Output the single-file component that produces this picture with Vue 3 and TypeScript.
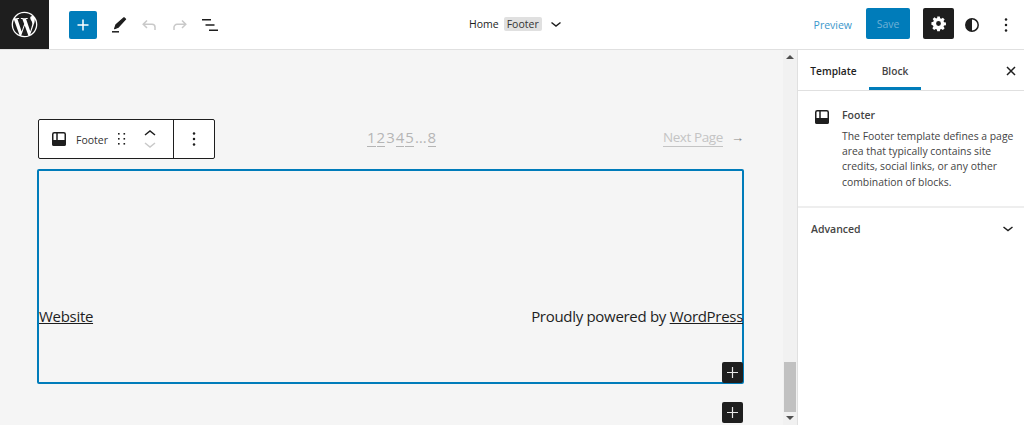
<script setup lang="ts">
const pages: { label: string; link: boolean }[] = [
  { label: '1', link: true },
  { label: '2', link: true },
  { label: '3', link: false },
  { label: '4', link: true },
  { label: '5', link: true },
  { label: '…', link: false },
  { label: '8', link: true },
]
</script>

<template>
  <div class="app">
    <header class="topbar">
      <div class="logo">
        <svg width="27" height="27" viewBox="0 0 24 24" fill="#fff">
          <path d="M12 .6a11.4 11.4 0 1 0 0 22.8A11.4 11.4 0 0 0 12 .6zM1.75 12c0-1.49.32-2.9.89-4.17l4.89 13.4A10.25 10.25 0 0 1 1.75 12zM12 22.25c-1 0-1.97-.15-2.89-.42l3.07-8.92 3.15 8.62.07.14c-1.06.37-2.2.58-3.4.58zm1.41-15.05c.62-.03 1.17-.1 1.17-.1.55-.06.49-.87-.06-.84 0 0-1.66.13-2.73.13-1 0-2.7-.13-2.7-.13-.55-.03-.62.81-.06.84 0 0 .52.07 1.07.1l1.6 4.37-2.24 6.72L5.73 7.2c.62-.03 1.17-.1 1.17-.1.55-.06.49-.87-.06-.84 0 0-1.66.13-2.73.13-.19 0-.42 0-.66-.01A10.24 10.24 0 0 1 12 1.75c2.67 0 5.1 1.02 6.93 2.69h-.13c-1 0-1.72.87-1.72 1.81 0 .84.49 1.55 1 2.39.39.68.84 1.55.84 2.8 0 .87-.33 1.88-.77 3.28l-1.01 3.38-3.73-10.9zm3.74 13.66 3.13-9.05c.58-1.46.78-2.62.78-3.66 0-.38-.03-.73-.07-1.05a10.25 10.25 0 0 1-3.84 13.76z" />
        </svg>
      </div>
      <div class="tools">
        <button class="add" aria-label="Add">
          <svg width="12" height="12" viewBox="0 0 12 12"><path d="M6 .5v11M.5 6h11" stroke="#fff" stroke-width="1.5" fill="none" /></svg>
        </button>
        <svg class="pen" width="24" height="24" viewBox="0 0 24 24">
          <path d="M20.6 6.2 19 4.8 11 11.8 9.6 15.6l3.7-1.4z" fill="#1e1e1e" stroke="#1e1e1e" stroke-width="1.2" stroke-linejoin="round" />
          <path d="M7 18.8h7" stroke="#1e1e1e" stroke-width="1.5" />
        </svg>
        <svg class="undo" width="24" height="24" viewBox="0 0 24 24" fill="none" stroke="#c9c9c9" stroke-width="1.5">
          <path d="M11 7.5 7.2 11.3l3.8 3.7M7.5 11.3H16c1.6 0 3 1.3 3 3V17" />
        </svg>
        <svg class="redo" width="24" height="24" viewBox="0 0 24 24" fill="none" stroke="#c9c9c9" stroke-width="1.5">
          <path d="M13 7.5l3.8 3.8L13 15M16.5 11.3H8c-1.6 0-3 1.3-3 3V17" />
        </svg>
        <svg class="list" width="24" height="24" viewBox="0 0 24 24" stroke="#1e1e1e" stroke-width="1.5">
          <path d="M3 6.7h9M6.5 12h9M10 17.3h9" />
        </svg>
      </div>
      <div class="crumbs">
        <span class="home">Home</span>
        <span class="chip">Footer</span>
        <svg width="20" height="20" viewBox="0 0 20 20" fill="none" stroke="#1e1e1e" stroke-width="1.5"><path d="M5.5 8.5 10 12l4.5-3.5" /></svg>
      </div>
      <div class="actions">
        <span class="preview">Preview</span>
        <button class="save">Save</button>
        <span class="gear">
          <svg width="17" height="17" viewBox="0 0 24 24" fill="#fff">
            <path fill-rule="evenodd" d="M10.2 2h3.6l.5 2.7 1.6.7 2.3-1.6 2.5 2.5-1.6 2.3.7 1.6 2.7.5v3.6l-2.7.5-.7 1.6 1.6 2.3-2.5 2.5-2.3-1.6-1.6.7-.5 2.7h-3.6l-.5-2.7-1.6-.7-2.3 1.6-2.5-2.5 1.6-2.3-.7-1.6L2 13.8v-3.6l2.7-.5.7-1.6-1.6-2.3 2.5-2.5 2.3 1.6 1.6-.7zM12 8.6a3.4 3.4 0 1 0 0 6.8 3.4 3.4 0 0 0 0-6.8z" />
          </svg>
        </span>
        <svg class="contrast" width="24" height="24" viewBox="0 0 24 24">
          <circle cx="12" cy="12" r="6.2" fill="none" stroke="#1e1e1e" stroke-width="1.5" />
          <path d="M12 5.8a6.2 6.2 0 0 0 0 12.4z" fill="#1e1e1e" />
        </svg>
        <svg class="more" width="24" height="24" viewBox="0 0 24 24" fill="#1e1e1e">
          <circle cx="12" cy="6.5" r="1.25" /><circle cx="12" cy="12" r="1.25" /><circle cx="12" cy="17.5" r="1.25" />
        </svg>
      </div>
    </header>

    <div class="body">
      <main class="canvas">
        <div class="top-row">
          <div class="block-toolbar">
            <div class="tb-main">
              <svg width="24" height="24" viewBox="0 0 24 24">
                <rect x="5.75" y="5.75" width="12.5" height="12.5" rx="1.5" fill="none" stroke="#1e1e1e" stroke-width="1.5" />
                <path d="M5 13h14v4a2 2 0 0 1-2 2H7a2 2 0 0 1-2-2z" fill="#1e1e1e" />
                <path d="M10 6v7" stroke="#1e1e1e" stroke-width="1.5" />
              </svg>
              <span class="tb-label">Footer</span>
              <svg class="drag" width="12" height="14" viewBox="0 0 12 14" fill="#1e1e1e">
                <rect x="2" y="1" width="1.6" height="1.6" /><rect x="7.5" y="1" width="1.6" height="1.6" />
                <rect x="2" y="6" width="1.6" height="1.6" /><rect x="7.5" y="6" width="1.6" height="1.6" />
                <rect x="2" y="11" width="1.6" height="1.6" /><rect x="7.5" y="11" width="1.6" height="1.6" />
              </svg>
              <div class="movers">
                <svg width="14" height="10" viewBox="0 0 14 10" fill="none" stroke="#1e1e1e" stroke-width="1.5"><path d="M2 7l5-4 5 4" /></svg>
                <svg width="14" height="10" viewBox="0 0 14 10" fill="none" stroke="#c9c9c9" stroke-width="1.5"><path d="M2 3l5 4 5-4" /></svg>
              </div>
            </div>
            <div class="tb-more">
              <svg width="24" height="24" viewBox="0 0 24 24" fill="#1e1e1e">
                <circle cx="12" cy="6.5" r="1.25" /><circle cx="12" cy="12" r="1.25" /><circle cx="12" cy="17.5" r="1.25" />
              </svg>
            </div>
          </div>
          <div class="pages">
            <span v-for="(p, i) in pages" :key="i" :class="{ plink: p.link }">{{ p.label }}</span>
          </div>
          <div class="next"><span class="plink">Next Page</span><span class="arrow">→</span></div>
        </div>
        <section class="footer-block">
          <a class="link">Website</a>
          <span class="powered">Proudly powered by <a class="link">WordPress</a></span>
          <button class="inserter in-block" aria-label="Add block">
            <svg width="11" height="11" viewBox="0 0 11 11"><path d="M5.5 0v11M0 5.5h11" stroke="#e8e8e8" stroke-width="1.2" fill="none" /></svg>
          </button>
        </section>
        <div class="after">
          <button class="inserter" aria-label="Add block">
            <svg width="11" height="11" viewBox="0 0 11 11"><path d="M5.5 0v11M0 5.5h11" stroke="#e8e8e8" stroke-width="1.2" fill="none" /></svg>
          </button>
        </div>
      </main>

      <div class="scrollbar">
        <span class="sb-up"></span>
        <div class="sb-track"><div class="sb-thumb"></div></div>
        <span class="sb-down"></span>
      </div>

      <aside class="sidebar">
        <div class="tabs">
          <span class="tab">Template</span>
          <span class="tab active">Block</span>
          <svg class="close" width="16" height="16" viewBox="0 0 16 16" stroke="#1e1e1e" stroke-width="1.5"><path d="M4 4l8 8M12 4l-8 8" /></svg>
        </div>
        <div class="card">
          <svg width="24" height="24" viewBox="0 0 24 24">
            <rect x="5.75" y="5.75" width="12.5" height="12.5" rx="1.5" fill="none" stroke="#1e1e1e" stroke-width="1.5" />
            <path d="M5 13h14v4a2 2 0 0 1-2 2H7a2 2 0 0 1-2-2z" fill="#1e1e1e" />
            <path d="M10 6v7" stroke="#1e1e1e" stroke-width="1.5" />
          </svg>
          <div class="card-text">
            <div class="card-title">Footer</div>
            <p>The Footer template defines a page area that typically contains site credits, social links, or any other combination of blocks.</p>
          </div>
        </div>
        <div class="advanced">
          <span>Advanced</span>
          <svg width="20" height="20" viewBox="0 0 20 20" fill="none" stroke="#1e1e1e" stroke-width="1.5"><path d="M5.5 8 10 11.5 14.5 8" /></svg>
        </div>
      </aside>
    </div>
  </div>
</template>

<style>
html, body { margin: 0; overflow: hidden; }
</style>

<style scoped>
.app { width: 1024px; height: 425px; overflow: hidden; font-family: "Open Sans", "Noto Sans", sans-serif; color: #1e1e1e; background: #fff; display: flex; flex-direction: column; }
button { border: 0; padding: 0; font-family: inherit; }
svg { display: block; flex: none; }
.topbar { height: 49px; flex: none; border-bottom: 1px solid #e0e0e0; display: flex; align-items: center; position: relative; }
.logo { width: 49px; height: 49px; background: #1e1e1e; display: flex; align-items: center; justify-content: center; }
.tools { display: flex; align-items: center; margin-left: 20px; }
.add { width: 28px; height: 28px; background: #007cba; border-radius: 2px; display: flex; align-items: center; justify-content: center; }
.pen { margin-left: 8px; }
.undo { margin-left: 7px; }
.redo { margin-left: 9px; }
.list { margin-left: 6px; }
.crumbs { position: absolute; left: 469px; top: 14px; display: flex; align-items: center; font-size: 10.5px; height: 20px; }
.home { color: #1e1e1e; }
.chip { background: #e0e0e0; border-radius: 2px; padding: 0 3px; margin-left: 5px; height: 14px; line-height: 14px; color: #333; }
.crumbs svg { margin-left: 4px; }
.actions { margin-left: auto; display: flex; align-items: center; }
.preview { font-size: 10.5px; color: #3b97cb; }
.save { margin-left: 14px; width: 44px; height: 31px; margin-bottom: 2px; background: #007cba; color: #6fb1d6; font-size: 10.5px; border-radius: 2px; }
.gear { margin-left: 13px; width: 31px; height: 31px; margin-bottom: 2px; background: #1e1e1e; border-radius: 2px; display: flex; align-items: center; justify-content: center; }
.contrast { margin-left: 6px; }
.more { margin-left: 10px; margin-right: 6px; }
.body { flex: 1; display: flex; min-height: 0; }
.canvas { width: 783px; flex: none; background: #f5f5f5; padding: 68px 40px 0 38px; box-sizing: border-box; }
.top-row { display: flex; align-items: center; height: 42px; position: relative; }
.block-toolbar { width: 177px; height: 40px; box-sizing: border-box; border: 1px solid #1e1e1e; border-radius: 2px; background: #fff; display: flex; }
.tb-main { width: 135px; display: flex; align-items: center; border-right: 1px solid #1e1e1e; box-sizing: border-box; padding-left: 8px; }
.tb-label { font-size: 10.5px; margin-left: 5px; padding-top: 2px; color: #333; }
.drag { margin-left: 8px; }
.movers { margin-left: 15px; display: flex; flex-direction: column; gap: 2px; }
.tb-more { flex: 1; display: flex; align-items: center; justify-content: center; }
.pages { margin-left: 152px; margin-bottom: 2px; font-size: 15px; color: #b5b5b5; display: flex; gap: 1px; }
.pages span { display: block; line-height: 17px; }
.plink { border-bottom: 1px solid #b5b5b5; }
.next { margin-left: auto; margin-right: -1px; margin-bottom: 2px; font-size: 13.5px; letter-spacing: -.4px; color: #c4c4c4; display: flex; align-items: flex-start; }
.next .plink { line-height: 17px; border-color: #c4c4c4; }
.arrow { margin-left: 8px; color: #888; font-size: 13px; line-height: 17px; letter-spacing: 0; }
.footer-block { margin-top: 9px; margin-left: -1px; height: 215px; width: 707px; box-sizing: border-box; border: 2px solid #007cba; border-radius: 2px; position: relative; display: flex; justify-content: space-between; align-items: flex-start; padding-top: 134px; font-size: 15px; letter-spacing: -.3px; line-height: 22px; }
.powered { margin-right: -1px; }
.link { text-decoration: underline; color: #1e1e1e; }
.inserter { width: 21px; height: 21px; background: #1e1e1e; border-radius: 2px; display: flex; align-items: center; justify-content: center; }
.in-block { position: absolute; right: -1px; bottom: -1px; }
.after { display: flex; justify-content: flex-end; margin-top: 18px; }
.scrollbar { width: 14px; flex: none; background: #f1f1f1; display: flex; flex-direction: column; align-items: center; position: relative; }
.sb-up { margin-top: 5px; width: 0; height: 0; border-left: 4px solid transparent; border-right: 4px solid transparent; border-bottom: 4px solid #505050; }
.sb-track { flex: 1; width: 100%; display: flex; flex-direction: column; justify-content: flex-end; }
.sb-thumb { height: 50px; margin: 0 1px 4px; background: #c1c1c1; }
.sb-down { margin-bottom: 5px; width: 0; height: 0; border-left: 4px solid transparent; border-right: 4px solid transparent; border-top: 4px solid #505050; }
.sidebar { flex: 1; border-left: 1px solid #e0e0e0; background: #fff; }
.tabs { height: 40px; border-bottom: 1px solid #e0e0e0; display: flex; position: relative; font-size: 10.2px; font-weight: 600; }
.tab { display: flex; align-items: center; justify-content: center; height: 40px; box-sizing: border-box; padding-top: 2px; }
.tab:first-child { width: 71px; }
.tab.active { width: 52px; border-bottom: 3px solid #007cba; padding-top: 5px; color: #444; }
.close { position: absolute; right: 5px; top: 13px; }
.card { display: flex; padding: 14px 6px 16px 12px; border-bottom: 2px solid #eee; }
.card-text { margin-left: 8px; }
.card-title { font-size: 10.5px; font-weight: 600; color: #444; line-height: 15px; margin-top: 3px; }
.card-text p { margin: 6px 0 0; font-size: 10.4px; line-height: 15.2px; color: #444; }
.advanced { height: 42px; display: flex; align-items: center; justify-content: space-between; padding: 0 6px 0 13px; font-size: 10.5px; font-weight: 600; color: #444; }
</style>
